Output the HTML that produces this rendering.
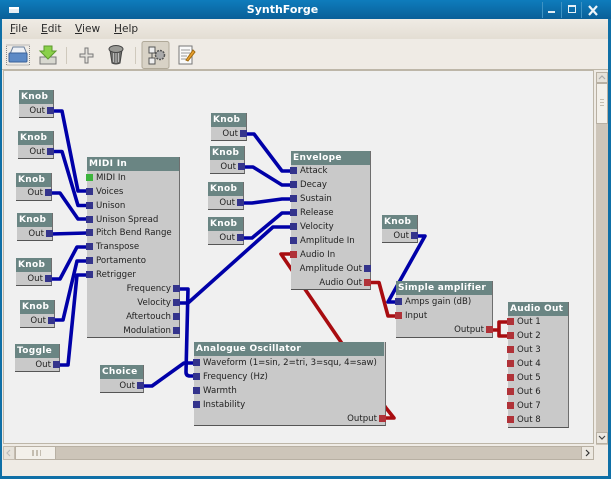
<!DOCTYPE html>
<html><head><meta charset="utf-8"><style>
html,body{margin:0;padding:0;width:611px;height:479px;overflow:hidden;background:#efebe5}
body{position:relative;font-family:"DejaVu Sans","Liberation Sans",sans-serif;font-size:8.6px;color:#222;filter:blur(.35px)}
div,svg,span{position:absolute;box-sizing:border-box}
u{text-decoration:underline}
.n{background:#c9c9c9;border-right:1px solid #6e6e6e;border-bottom:1px solid #555}
.h{left:0;top:0;right:0;height:14px;background:#6a8583;color:#fff;font-weight:bold;font-size:9px;letter-spacing:.3px;line-height:14px;padding-left:2px;white-space:nowrap}
.l,.r{white-space:nowrap;line-height:12px;height:12px}
.l{left:9px}.r{right:8px}
.b,.e,.g{width:7px;height:7px;margin:-1px}
.b{background:#34348c}.e{background:#b03238}.g{background:#3cb43c}
.m{top:22px;font-size:10.6px;line-height:14px;color:#2a2a2a}
</style></head><body>
<!-- window frame -->
<div style="left:0;top:0;width:611px;height:479px;background:#0f6fa6"></div>
<div style="left:0;top:0;width:611px;height:19px;background:linear-gradient(#0e7cbc,#0a5f98)"></div>
<div style="left:2px;top:19px;width:606px;height:457px;background:#efebe5"></div>
<div style="left:0;top:0;width:611px;text-align:center;color:#fff;font-weight:bold;font-size:11px;line-height:19px;padding-right:46px">SynthForge</div>
<div style="left:9px;top:7px;width:10px;height:6px;background:#e6eef4;border-top:2px solid #fff"></div>
<!-- window buttons -->
<div style="left:542px;top:2px;width:1px;height:16px;background:#3e93c4"></div>
<div style="left:561px;top:2px;width:1px;height:16px;background:#3e93c4"></div>
<div style="left:581px;top:2px;width:1px;height:16px;background:#3e93c4"></div>
<div style="left:548px;top:11px;width:7px;height:2px;background:#dfeaf2"></div>
<div style="left:568px;top:5px;width:8px;height:8px;border:1px solid #e6f0f6;border-top:2px solid #e6f0f6"></div>
<svg style="left:587px;top:5px" width="12" height="12"><path d="M2 1 L10 10 M10 1 L2 10" stroke="#eef4f8" stroke-width="2.2"/></svg>
<!-- menu -->
<div style="left:2px;top:19px;width:606px;height:20px;background:linear-gradient(#efebe4,#e3ddd3)"></div>
<div class="m" style="left:10px"><u>F</u>ile</div>
<div class="m" style="left:41px"><u>E</u>dit</div>
<div class="m" style="left:75px"><u>V</u>iew</div>
<div class="m" style="left:114px"><u>H</u>elp</div>
<!-- toolbar -->
<div style="left:2px;top:39px;width:606px;height:31px;background:#efebe5;border-bottom:1px solid #bdb6a8"></div>
<svg style="left:0;top:40px" width="210" height="30">
<rect x="6.500" y="5" width="23" height="20" fill="none" stroke="#888" stroke-dasharray="1 1"/>
<path d="M10 14 L13 7 H24 L27 14 Z" fill="#eef1f6" stroke="#6a7f9c"/>
<rect x="9" y="13" width="18" height="9" rx="1" fill="#5d8ac6" stroke="#3a6299"/>
<path d="M40 17 H56 V24 H40 Z" fill="#d8d8d0" stroke="#777"/>
<path d="M44 6 H52 V11 H56 L48 19 L40 11 H44 Z" fill="#8ad04a" stroke="#5c9a2c"/>
<rect x="66" y="7" width="1" height="17" fill="#cfc9bd"/>
<path d="M85 8 H88 V14 H93 V17 H88 V23 H85 V17 H80 V14 H85 Z" fill="#e4e2dc" stroke="#777"/>
<path d="M110 10 H122 L120 23 Q116 25 112 23 Z" fill="#6f6f6c" stroke="#444"/>
<ellipse cx="116" cy="9" rx="7" ry="3.500" fill="#9a9a96" stroke="#444"/>
<path d="M113.500 13 V22 M116 13 V23 M118.500 13 V22" stroke="#bbb"/>
<rect x="135" y="7" width="1" height="17" fill="#cfc9bd"/>
<rect x="142" y="1.500" width="27" height="27" rx="2" fill="#d8d2c6" stroke="#b0a999"/>
<rect x="149" y="7" width="6" height="6" fill="#eee" stroke="#555"/>
<rect x="149" y="18" width="6" height="6" fill="#eee" stroke="#555"/>
<circle cx="160" cy="15" r="4.500" fill="#aaa" stroke="#555" stroke-width="1.500" stroke-dasharray="2 1"/>
<path d="M152 13 V18 M155 15 H156" stroke="#555"/>
<rect x="179" y="6" width="13" height="18" fill="#fafafa" stroke="#777"/>
<path d="M181 10 H190 M181 13 H190 M181 16 H187 M181 19 H186" stroke="#999"/>
<path d="M186 20 L193 10 L195 12 L188 21 Z" fill="#e8a030" stroke="#a06a10"/>
</svg>
<!-- canvas -->
<div style="left:3px;top:70px;width:591px;height:374px;background:#f0f0f0;border:1px solid #bdb6a8"></div>
<!-- v scrollbar -->
<div style="left:596px;top:72px;width:12px;height:373px;background:#cdc5b9"></div>
<div style="left:596px;top:72px;width:12px;height:11px;background:#e6e2da;border:1px solid #b8b0a3"></div>
<svg style="left:598px;top:75px" width="8" height="6"><path d="M1 4 L4 1 L7 4" fill="none" stroke="#aaa" stroke-width="1.200"/></svg>
<div style="left:596px;top:83px;width:12px;height:41px;background:#f3f0ea;border:1px solid #b8b0a3"></div>
<div style="left:600px;top:99px;width:4px;height:9px;background:repeating-linear-gradient(#c4bdb0 0 1px,transparent 1px 3px)"></div>
<div style="left:596px;top:432px;width:12px;height:12px;background:#ece8e1;border:1px solid #b8b0a3"></div>
<svg style="left:598px;top:435px" width="8" height="6"><path d="M1 1 L4 4 L7 1" fill="none" stroke="#444" stroke-width="1.200"/></svg>
<!-- h scrollbar -->
<div style="left:3px;top:446px;width:591px;height:14px;background:#cdc5b9;border-top:1px solid #b8b0a3;border-bottom:1px solid #b8b0a3"></div>
<div style="left:3px;top:446px;width:12px;height:14px;background:#e6e2da;border:1px solid #c4bcb0"></div>
<svg style="left:6px;top:449px" width="6" height="8"><path d="M4 1 L1 4 L4 7" fill="none" stroke="#bbb" stroke-width="1.200"/></svg>
<div style="left:15px;top:446px;width:41px;height:14px;background:#f3f0ea;border:1px solid #b8b0a3"></div>
<div style="left:32px;top:450px;width:9px;height:6px;background:repeating-linear-gradient(90deg,#c4bdb0 0 2px,transparent 2px 4px)"></div>
<div style="left:581px;top:446px;width:13px;height:14px;background:#ece8e1;border:1px solid #b8b0a3"></div>
<svg style="left:585px;top:449px" width="6" height="8"><path d="M1 1 L4 4 L1 7" fill="none" stroke="#333" stroke-width="1.200"/></svg>

<!-- wires -->
<svg style="left:0;top:0;z-index:1" width="611" height="479" fill="none" stroke-linejoin="round">
<g stroke="#a80c10" stroke-width="3.600">
<path d="M385 418 H394 L386 408 L281 254 H291"/>
<path d="M371 282.500 H379 L388 316 H396"/>
<path d="M492 330 H499 V322 H507 M499 330 V336 H507"/>
</g>
<g stroke="#0000a8" stroke-width="3.600">
<path d="M53 111 H62 L78 191 H87"/>
<path d="M53 151.500 H62 L78 205.500 H87"/>
<path d="M51 193 H60 L78 219 H87"/>
<path d="M51 234 L87 233"/>
<path d="M51 279 H60 L77 247 H87"/>
<path d="M54 320 H63 L77 261 H87"/>
<path d="M59 365 H68 L77 275 H87"/>
<path d="M180 289 H188 L186 372 Q186 376 190 376 H194"/>
<path d="M180 303 H188 L273 227 H291"/>
<path d="M143 386 H152 L184 363 H194"/>
<path d="M246 134 H254 L282 171 H291"/>
<path d="M245 167 H253 L282 185 H291"/>
<path d="M243 203 H252 L282 199 H291"/>
<path d="M243 238 H252 L282 213 H291"/>
<path d="M417 236 H425 L388 302 H396"/>
</g>
</svg>
<!-- nodes -->
<div style="left:0;top:0;width:611px;height:479px;z-index:2">
<!-- knobs -->
<div class="n" style="left:19px;top:90px;width:35px;height:28px"><div class="h">Knob</div><div class="r" style="top:15px">Out</div><div class="b" style="right:0;top:18px"></div></div>
<div class="n" style="left:18px;top:131px;width:36px;height:28px"><div class="h">Knob</div><div class="r" style="top:15px">Out</div><div class="b" style="right:0;top:18px"></div></div>
<div class="n" style="left:16px;top:173px;width:36px;height:28px"><div class="h">Knob</div><div class="r" style="top:14px">Out</div><div class="b" style="right:0;top:17px"></div></div>
<div class="n" style="left:17px;top:213px;width:36px;height:28px"><div class="h">Knob</div><div class="r" style="top:15px">Out</div><div class="b" style="right:0;top:18px"></div></div>
<div class="n" style="left:16px;top:258px;width:36px;height:28px"><div class="h">Knob</div><div class="r" style="top:15px">Out</div><div class="b" style="right:0;top:18px"></div></div>
<div class="n" style="left:20px;top:300px;width:35px;height:28px"><div class="h">Knob</div><div class="r" style="top:15px">Out</div><div class="b" style="right:0;top:18px"></div></div>
<div class="n" style="left:15px;top:344px;width:45px;height:28px"><div class="h">Toggle</div><div class="r" style="top:15px">Out</div><div class="b" style="right:0;top:18px"></div></div>
<div class="n" style="left:100px;top:365px;width:44px;height:28px"><div class="h">Choice</div><div class="r" style="top:15px">Out</div><div class="b" style="right:0;top:18px"></div></div>
<div class="n" style="left:211px;top:113px;width:36px;height:28px"><div class="h">Knob</div><div class="r" style="top:15px">Out</div><div class="b" style="right:0;top:18px"></div></div>
<div class="n" style="left:210px;top:146px;width:35px;height:28px"><div class="h">Knob</div><div class="r" style="top:15px">Out</div><div class="b" style="right:0;top:18px"></div></div>
<div class="n" style="left:208px;top:182px;width:36px;height:28px"><div class="h">Knob</div><div class="r" style="top:15px">Out</div><div class="b" style="right:0;top:18px"></div></div>
<div class="n" style="left:208px;top:217px;width:36px;height:28px"><div class="h">Knob</div><div class="r" style="top:15px">Out</div><div class="b" style="right:0;top:18px"></div></div>
<div class="n" style="left:382px;top:215px;width:36px;height:28px"><div class="h">Knob</div><div class="r" style="top:15px">Out</div><div class="b" style="right:0;top:18px"></div></div>
<!-- MIDI In -->
<div class="n" style="left:87px;top:157px;width:93px;height:181px"><div class="h">MIDI In</div>
<div class="g" style="left:0;top:18px"></div><div class="l" style="top:15px">MIDI In</div>
<div class="b" style="left:0;top:32px"></div><div class="l" style="top:29px">Voices</div>
<div class="b" style="left:0;top:46px"></div><div class="l" style="top:43px">Unison</div>
<div class="b" style="left:0;top:60px"></div><div class="l" style="top:57px">Unison Spread</div>
<div class="b" style="left:0;top:73px"></div><div class="l" style="top:70px">Pitch Bend Range</div>
<div class="b" style="left:0;top:87px"></div><div class="l" style="top:84px">Transpose</div>
<div class="b" style="left:0;top:101px"></div><div class="l" style="top:98px">Portamento</div>
<div class="b" style="left:0;top:115px"></div><div class="l" style="top:112px">Retrigger</div>
<div class="b" style="right:0;top:129px"></div><div class="r" style="top:126px">Frequency</div>
<div class="b" style="right:0;top:143px"></div><div class="r" style="top:140px">Velocity</div>
<div class="b" style="right:0;top:157px"></div><div class="r" style="top:154px">Aftertouch</div>
<div class="b" style="right:0;top:171px"></div><div class="r" style="top:168px">Modulation</div>
</div>
<!-- Envelope -->
<div class="n" style="left:291px;top:151px;width:80px;height:139px"><div class="h">Envelope</div>
<div class="b" style="left:0;top:17px"></div><div class="l" style="top:14px">Attack</div>
<div class="b" style="left:0;top:31px"></div><div class="l" style="top:28px">Decay</div>
<div class="b" style="left:0;top:45px"></div><div class="l" style="top:42px">Sustain</div>
<div class="b" style="left:0;top:59px"></div><div class="l" style="top:56px">Release</div>
<div class="b" style="left:0;top:73px"></div><div class="l" style="top:70px">Velocity</div>
<div class="b" style="left:0;top:87px"></div><div class="l" style="top:84px">Amplitude In</div>
<div class="e" style="left:0;top:101px"></div><div class="l" style="top:98px">Audio In</div>
<div class="b" style="right:0;top:115px"></div><div class="r" style="top:112px">Amplitude Out</div>
<div class="e" style="right:0;top:129px"></div><div class="r" style="top:126px">Audio Out</div>
</div>
<!-- Simple amplifier -->
<div class="n" style="left:396px;top:281px;width:97px;height:57px"><div class="h">Simple amplifier</div>
<div class="b" style="left:0;top:18px"></div><div class="l" style="top:15px">Amps gain (dB)</div>
<div class="e" style="left:0;top:32px"></div><div class="l" style="top:29px">Input</div>
<div class="e" style="right:0;top:46px"></div><div class="r" style="top:43px">Output</div>
</div>
<!-- Audio Out -->
<div class="n" style="left:508px;top:302px;width:61px;height:126px"><div class="h">Audio Out</div>
<div class="e" style="left:0;top:17px"></div><div class="l" style="top:14px">Out 1</div>
<div class="e" style="left:0;top:31px"></div><div class="l" style="top:28px">Out 2</div>
<div class="e" style="left:0;top:45px"></div><div class="l" style="top:42px">Out 3</div>
<div class="e" style="left:0;top:59px"></div><div class="l" style="top:56px">Out 4</div>
<div class="e" style="left:0;top:73px"></div><div class="l" style="top:70px">Out 5</div>
<div class="e" style="left:0;top:87px"></div><div class="l" style="top:84px">Out 6</div>
<div class="e" style="left:0;top:101px"></div><div class="l" style="top:98px">Out 7</div>
<div class="e" style="left:0;top:115px"></div><div class="l" style="top:112px">Out 8</div>
</div>
<!-- Oscillator -->
<div class="n" style="left:194px;top:342px;width:192px;height:84px"><div class="h" style="right:1px">Analogue Oscillator</div>
<div class="b" style="left:0;top:18px"></div><div class="l" style="top:15px">Waveform (1=sin, 2=tri, 3=squ, 4=saw)</div>
<div class="b" style="left:0;top:32px"></div><div class="l" style="top:29px">Frequency (Hz)</div>
<div class="b" style="left:0;top:46px"></div><div class="l" style="top:43px">Warmth</div>
<div class="b" style="left:0;top:60px"></div><div class="l" style="top:57px">Instability</div>
<div class="e" style="right:0;top:74px"></div><div class="r" style="top:71px">Output</div>
</div>
</div>
</body></html>
